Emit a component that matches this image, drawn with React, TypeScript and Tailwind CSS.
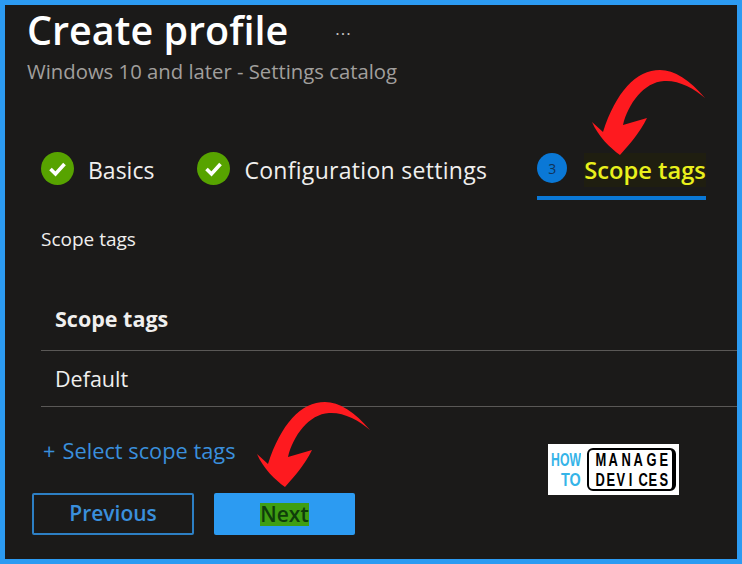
const fontStack = { fontFamily: '"Open Sans", "Noto Sans", sans-serif' }

function CheckBadge() {
  return (
    <svg width="33" height="33" viewBox="0 0 33 33" className="shrink-0">
      <circle cx="16.5" cy="16.5" r="16.5" fill="#57a300" />
      <path d="M9.5 17l5 5 9-10" fill="none" stroke="#ffffff" strokeWidth="3.6" />
    </svg>
  )
}

function RedArrow({ className }: { className: string }) {
  return (
    <svg width="118" height="90" viewBox="0 0 118 90" className={className}>
      <path
        d="M115 30C100 12 84 2 70 2C46 2 26 24 13 64L2 54C8 68 20 80 30 87C40 76 50 64 57 50L33 57C38 36 54 14 74 13C88 12 104 20 115 30Z"
        fill="#fe1a1f"
      />
    </svg>
  )
}

function ManageWord({ word }: { word: string }) {
  return (
    <div className="flex w-full justify-between text-[19px] font-bold leading-[20px] text-black" style={{ fontFamily: '"Liberation Sans", sans-serif' }}>
      {word.split('').map((letter, i) => (
        <span key={i} className="inline-block w-[9px] scale-x-[.68] text-center">{letter}</span>
      ))}
    </div>
  )
}

function Logo() {
  return (
    <div className="flex h-[51px] w-[131px] items-center gap-[6px] bg-white pl-[4px] pr-[3px]">
      <div className="flex w-[29px] flex-col items-end text-[18px] font-bold leading-[20px] text-[#35b4e8]" style={{ fontFamily: '"Liberation Sans", sans-serif' }}>
        <span className="origin-right scale-x-[.68]">HOW</span>
        <span className="origin-right scale-x-[.8]">TO</span>
      </div>
      <div className="flex h-[43px] min-w-0 flex-1 flex-col justify-center rounded-[6px] border-2 border-r-[4px] border-black px-[5px]">
        <ManageWord word="MANAGE" />
        <ManageWord word="DEVICES" />
      </div>
    </div>
  )
}

export default function App() {
  return (
    <div className="relative h-[564px] w-[742px] overflow-hidden border-[5px] border-[#2c9bf2] bg-[#1b1a19] text-[#f0efee]" style={fontStack}>
      <div className="flex items-center gap-[47px] pl-[22px] pt-[1px]">
        <h1 className="text-[39.5px] font-semibold leading-[48px] text-white">Create profile</h1>
        <span className="mb-[3px] text-[17px] leading-none tracking-[1px] text-[#c8c6c4]">...</span>
      </div>
      <p className="mt-[4px] pl-[22px] text-[20.3px] leading-[26px] text-[#a19f9d]">Windows 10 and later - Settings catalog</p>

      <div className="mt-[61px] flex items-start pl-[36px]">
        <div className="mt-[7px]"><CheckBadge /></div>
        <span className="ml-[14px] mt-[2px] text-[23px] leading-[46px]">Basics</span>
        <div className="ml-[43px] mt-[7px]"><CheckBadge /></div>
        <span className="ml-[14px] mt-[2px] text-[23px] leading-[46px] tracking-[0.3px]">Configuration settings</span>
        <div className="ml-[50px] flex flex-col">
          <div className="flex h-[46px] items-center">
            <span className="flex h-[30px] w-[30px] items-center justify-center rounded-full bg-[#0a78d6] text-[14px] text-[#10335a]">3</span>
            <span className="ml-[17px] mt-[4px] bg-[#1f1e10] text-[23.7px] font-semibold leading-[34px] text-[#e9f01c]">Scope tags</span>
          </div>
          <div className="mt-[5px] h-[4px] w-full bg-[#0a78d6]" />
        </div>
      </div>

      <p className="ml-[36px] mt-[23px] text-[19px] leading-[32px]">Scope tags</p>

      <div className="ml-[36px] mt-[34px]">
        <div className="flex h-[62px] items-center border-b border-[#5a5856] pl-[14px] text-[21.5px] font-bold">Scope tags</div>
        <div className="flex h-[56px] items-center border-b border-[#5a5856] pl-[14px] pt-[2px] text-[21.5px]">Default</div>
      </div>

      <div className="relative ml-[38px] mt-[27px] flex items-center text-[21.8px] leading-[34px] text-[#3a8fdc]">
        <span className="mr-[7px]">+</span>
        <span>Select scope tags</span>
        <div className="absolute left-[505px] top-[10px]"><Logo /></div>
      </div>

      <div className="ml-[27px] mt-[25px] flex gap-[20px]">
        <button type="button" className="h-[42px] w-[162px] rounded-[2px] border-2 border-[#2d7fc4] text-[21px] font-semibold text-[#3a8fdc]">
          Previous
        </button>
        <button type="button" className="flex h-[42px] w-[141px] items-center justify-center rounded-[2px] bg-[#2c9bf2] text-[21px] font-semibold text-[#0f3d0a]">
          <span className="bg-[#3f9e12] leading-[23px]">Next</span>
        </button>
      </div>

      <RedArrow className="absolute left-[585px] top-[63px]" />
      <RedArrow className="absolute left-[250px] top-[395px]" />
    </div>
  )
}
